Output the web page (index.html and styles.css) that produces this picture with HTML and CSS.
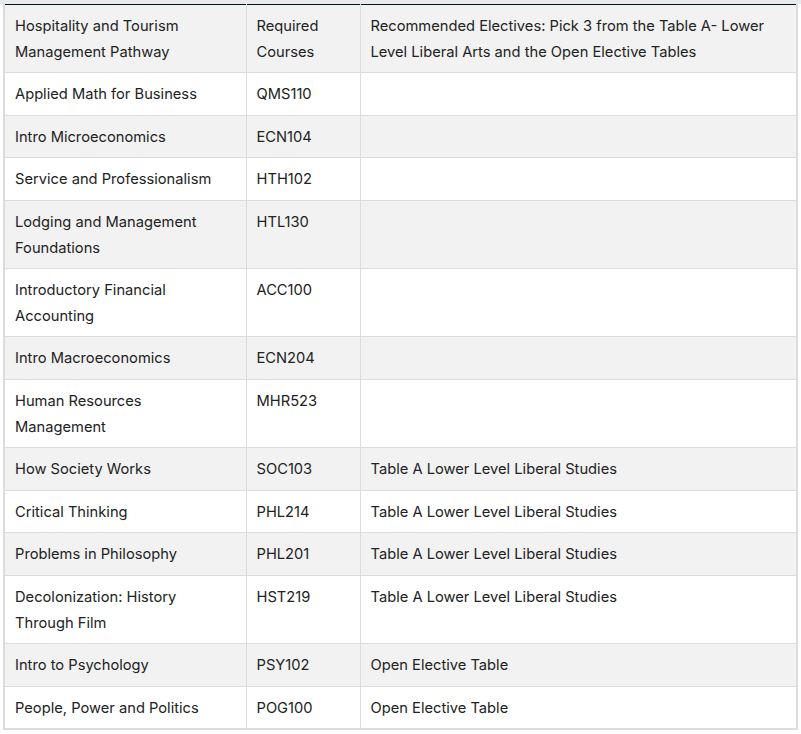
FILE: index.html
```html
<!DOCTYPE html>
<html lang="en">
<head>
<meta charset="utf-8">
<title>Hospitality and Tourism Management Pathway</title>
<link rel="stylesheet" href="styles.css">
</head>
<body>
<div class="topbar"></div>
<div class="wrap">
<table class="courses">
  <colgroup>
    <col class="c1"><col class="c2"><col class="c3">
  </colgroup>
  <thead>
    <tr>
      <th>Hospitality and Tourism Management Pathway</th>
      <th>Required Courses</th>
      <th>Recommended Electives: Pick 3 from the Table A- Lower Level Liberal Arts and the Open Elective Tables</th>
    </tr>
  </thead>
  <tbody>
    <tr><td>Applied Math for Business</td><td>QMS110</td><td></td></tr>
    <tr><td>Intro Microeconomics</td><td>ECN104</td><td></td></tr>
    <tr><td>Service and Professionalism</td><td>HTH102</td><td></td></tr>
    <tr><td>Lodging and Management Foundations</td><td>HTL130</td><td></td></tr>
    <tr><td>Introductory Financial Accounting</td><td>ACC100</td><td></td></tr>
    <tr><td>Intro Macroeconomics</td><td>ECN204</td><td></td></tr>
    <tr><td>Human Resources Management</td><td>MHR523</td><td></td></tr>
    <tr><td>How Society Works</td><td>SOC103</td><td>Table A Lower Level Liberal Studies</td></tr>
    <tr><td>Critical Thinking</td><td>PHL214</td><td>Table A Lower Level Liberal Studies</td></tr>
    <tr><td>Problems in Philosophy</td><td>PHL201</td><td>Table A Lower Level Liberal Studies</td></tr>
    <tr><td>Decolonization: History Through Film</td><td>HST219</td><td>Table A Lower Level Liberal Studies</td></tr>
    <tr><td>Intro to Psychology</td><td>PSY102</td><td>Open Elective Table</td></tr>
    <tr><td>People, Power and Politics</td><td>POG100</td><td>Open Elective Table</td></tr>
  </tbody>
</table>
</div>
</body>
</html>
```
FILE: styles.css
```css
html, body {
  margin: 0;
  padding: 0;
  background: #ffffff;
}
body {
  font-family: Inter, "Liberation Sans", Arial, sans-serif;
  color: #222222;
}
.topbar {
  height: 4px;
  background: #e8ebee;
}
.wrap {
  padding: 0 3px 0 3px;
}
.courses {
  width: 795px;
  border-collapse: collapse;
  border-top: 1px solid #111111;
  border-left: 2px solid #dcdcdc;
  border-right: 2px solid #dcdcdc;
  border-bottom: 2px solid #dcdcdc;
  font-size: 14.7px;
  line-height: 25.6px;
}
.c1 { width: 242px; }
.c2 { width: 114px; }
.courses th,
.courses td {
  text-align: left;
  vertical-align: top;
  font-weight: normal;
  padding: 9px 10px 7px 10px;
  border: 1px solid #dcdcdc;
}
.courses thead th {
  border-top: 1px solid #111111;
}
.courses thead tr,
.courses tbody tr:nth-child(even) {
  background: #f2f2f2;
}
.courses tbody tr:nth-child(odd) {
  background: #ffffff;
}
```
